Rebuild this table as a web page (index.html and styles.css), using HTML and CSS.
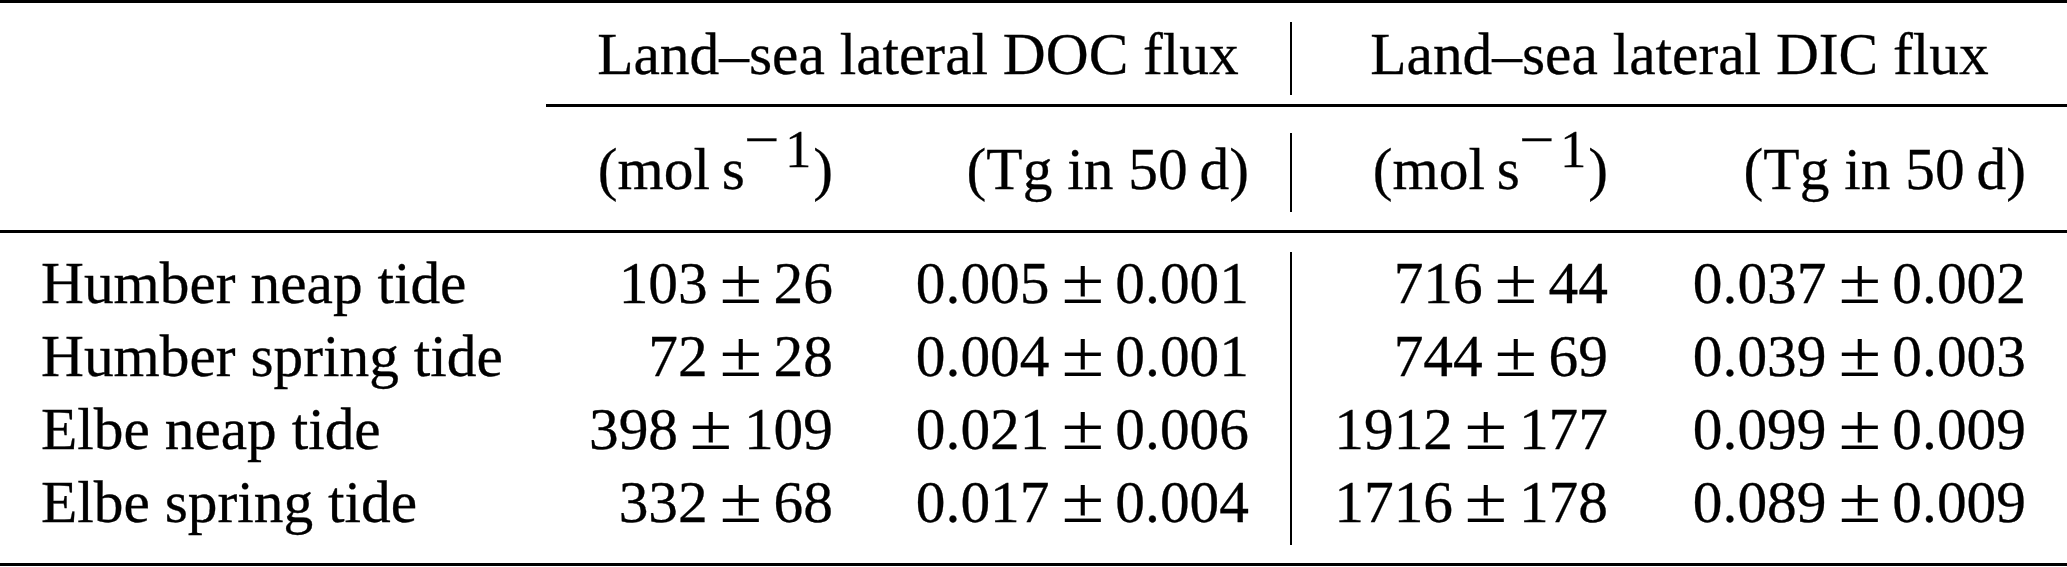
FILE: index.html
```html
<!DOCTYPE html>
<html lang="en">
<head>
<meta charset="utf-8">
<title>Land–sea lateral fluxes</title>
<link rel="stylesheet" href="styles.css">
</head>
<body>
<div class="tbl">
  <div class="thead">
    <div class="cell top blank"></div>
    <div class="cell top group">Land–sea lateral DOC flux</div>
    <div class="vl vl-top"></div>
    <div class="cell top group">Land–sea lateral DIC flux</div>
    <div class="cmid"></div>
    <div class="cell unit blank"></div>
    <div class="cell unit num">(mol&#8201;s<span class="sup"><span class="mn">−</span><span class="one">1</span></span>)</div>
    <div class="cell unit num c3">(Tg in 50&#8201;d)</div>
    <div class="vl vl-unit"></div>
    <div class="cell unit num c5">(mol&#8201;s<span class="sup"><span class="mn">−</span><span class="one">1</span></span>)</div>
    <div class="cell unit num c6">(Tg in 50&#8201;d)</div>
  </div>
  <div class="tbody">
    <div class="vl vl-body"></div>

    <div class="cell name">Humber neap tide</div>
    <div class="cell num">103<span class="pm">±</span>26</div>
    <div class="cell num c3">0.005<span class="pm">±</span>0.001</div>
    <div class="cell num c5">716<span class="pm">±</span>44</div>
    <div class="cell num c6">0.037<span class="pm">±</span>0.002</div>

    <div class="cell name">Humber spring tide</div>
    <div class="cell num">72<span class="pm">±</span>28</div>
    <div class="cell num c3">0.004<span class="pm">±</span>0.001</div>
    <div class="cell num c5">744<span class="pm">±</span>69</div>
    <div class="cell num c6">0.039<span class="pm">±</span>0.003</div>

    <div class="cell name">Elbe neap tide</div>
    <div class="cell num">398<span class="pm">±</span>109</div>
    <div class="cell num c3">0.021<span class="pm">±</span>0.006</div>
    <div class="cell num c5">1912<span class="pm">±</span>177</div>
    <div class="cell num c6">0.099<span class="pm">±</span>0.009</div>

    <div class="cell name">Elbe spring tide</div>
    <div class="cell num">332<span class="pm">±</span>68</div>
    <div class="cell num c3">0.017<span class="pm">±</span>0.004</div>
    <div class="cell num c5">1716<span class="pm">±</span>178</div>
    <div class="cell num c6">0.089<span class="pm">±</span>0.009</div>
  </div>
</div>
</body>
</html>
```

FILE: styles.css
```css
html, body {
  margin: 0;
  padding: 0;
  background: #fff;
}

body {
  font-family: "Liberation Serif", "Times New Roman", serif;
  font-size: 59.4px;
  color: #000;
  -webkit-text-stroke: 0.3px #000;
}

.tbl {
  width: 2067px;
  border-top: 3px solid #000;
  border-bottom: 3px solid #000;
}

.thead,
.tbody {
  display: grid;
  grid-template-columns: 546px 327px 417px 2px 356px 419px;
}

.thead {
  grid-template-rows: 101px 3px 123px;
  border-bottom: 3px solid #000;
}

.tbody {
  grid-auto-rows: 73px;
  padding: 13.6px 0 24.4px;
}

.cell {
  line-height: 73px;
  white-space: nowrap;
}

.top {
  grid-row: 1;
  padding-top: 14.6px;
}

.group {
  grid-column: span 2;
  text-align: center;
}

.unit {
  grid-row: 3;
  padding-top: 26.1px;
}

.name {
  padding-left: 41px;
}

.num {
  text-align: right;
  padding-right: 40px;
}

.c3 {
  padding-right: 41px;
}

.c5 {
  padding-right: 40px;
}

.c6 {
  padding-right: 41px;
}

.vl {
  grid-column: 4;
  background: #000;
}

.vl-top {
  grid-row: 1;
  margin: 19px 0 9px;
}

.vl-unit {
  grid-row: 3;
  margin: 26px 0 18px;
}

.vl-body {
  grid-row: 1 / span 4;
  margin: 5.4px 0 -6.4px;
}

.cmid {
  grid-row: 2;
  grid-column: 2 / -1;
  background: #000;
}

.sup {
  font-size: 52px;
  line-height: 0;
  vertical-align: 22px;
}

.mn {
  display: inline-block;
  vertical-align: 10px;
  transform: scaleX(1.2);
  margin-left: 2px;
}

.one {
  margin-left: 9px;
  margin-right: 2px;
}

.pm {
  display: inline-block;
  font-size: 1.1em;
  line-height: 0;
  margin: 0 15px;
  transform: scaleX(1.18);
  -webkit-text-stroke: 0.2px #000;
}
```
